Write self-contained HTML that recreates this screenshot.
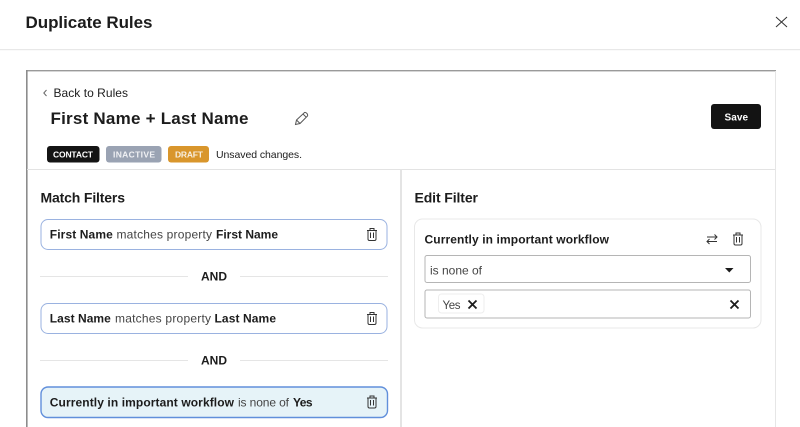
<!DOCTYPE html>
<html><head><meta charset="utf-8"><title>Duplicate Rules</title>
<style>
html,body{margin:0;padding:0;background:#fff;width:800px;height:427px;overflow:hidden}
svg{display:block;filter:blur(.25px)}
text{font-family:"Liberation Sans",sans-serif;fill:#1c1c1c}
.b{font-weight:700}
.r{fill:#444}
.w{fill:#fff;font-weight:700;font-size:8.5px}
</style></head><body>
<svg width="800" height="427" viewBox="0 0 800 427" xmlns="http://www.w3.org/2000/svg">
<defs>
<g id="trash" fill="none" stroke="#333" stroke-width="1">
<path d="M-5 -4H5M-2 -4V-6H2V-4M-4 -4V4.500Q-4 6 -2.500 6H2.500Q4 6 4 4.500V-4M-1.500 -2V3.500M1.500 -2V3.500"/>
</g>
</defs>
<rect width="800" height="427" fill="#fff"/>
<text x="25.500" y="28" class="b" font-size="17" textLength="127" lengthAdjust="spacing">Duplicate Rules</text>
<path d="M776 17L787 27M787 17L776 27" stroke="#333" stroke-width="1" fill="none"/>
<rect x="0" y="49" width="800" height="1.200" fill="#e8e8e8"/>

<rect x="26" y="70" width="750" height="1.400" fill="#9a9a9a"/>
<rect x="26" y="70" width="1.600" height="357" fill="#8c8c8c"/>
<rect x="775" y="71" width="1" height="356" fill="#e6e6e6"/>
<rect x="27" y="169" width="748" height="1" fill="#e3e3e3"/>
<rect x="400" y="169" width="2" height="258" fill="#e4e4e4"/>

<path d="M46.500 90L43.800 93L46.500 96" stroke="#666" stroke-width="1" fill="none"/>
<text x="53.500" y="97" font-size="12" textLength="74.500" lengthAdjust="spacing">Back to Rules</text>
<text x="50.500" y="124" class="b" font-size="17" textLength="198" lengthAdjust="spacing">First Name + Last Name</text>
<path d="M295.500 124.500L296.500 120L304.500 112.500Q305.500 112 307 113.500Q308 115 307.500 116L300 123.500ZM296.500 120L300 123.500M303 114L306.300 117.300" stroke="#555" stroke-width="1" fill="none"/>

<rect x="47" y="146" width="52.500" height="16.500" rx="3" fill="#141414"/>
<text x="53" y="157.700" class="w" textLength="40" lengthAdjust="spacing">CONTACT</text>
<rect x="106" y="146" width="55.500" height="16.500" rx="3" fill="#9aa3b3"/>
<text x="113" y="157.700" class="w" textLength="42" lengthAdjust="spacing" style="fill:#f0f1f4">INACTIVE</text>
<rect x="168" y="146" width="41" height="16.500" rx="3" fill="#d9962c"/>
<text x="175" y="157.700" class="w" textLength="28" lengthAdjust="spacing" style="fill:#f8efe0">DRAFT</text>
<text x="216" y="158" font-size="10.500" textLength="86" lengthAdjust="spacing">Unsaved changes.</text>

<rect x="711" y="104" width="50" height="25" rx="3" fill="#131313"/>
<text x="724.500" y="120.500" font-size="10" class="b" style="fill:#fff" textLength="23.500" lengthAdjust="spacing">Save</text>

<text x="40.500" y="202.500" class="b" font-size="14" textLength="84.500" lengthAdjust="spacing">Match Filters</text>

<rect x="41" y="219.500" width="346" height="30" rx="7" fill="#fff" stroke="#9ab2e0" stroke-width="1"/>
<text x="49.800" y="238.600" class="b" font-size="12" textLength="63" lengthAdjust="spacing">First Name</text>
<text x="116.500" y="238.600" class="r" font-size="12" textLength="95.500" lengthAdjust="spacing">matches property</text>
<text x="216" y="238.600" class="b" font-size="12" textLength="62" lengthAdjust="spacing">First Name</text>
<use href="#trash" x="372" y="234.500"/>

<rect x="40" y="276" width="148" height="1" fill="#e5e5e5"/>
<rect x="240" y="276" width="148" height="1" fill="#e5e5e5"/>
<text x="201" y="280.500" class="b" font-size="12" textLength="26" lengthAdjust="spacing">AND</text>

<rect x="41" y="303.500" width="346" height="30" rx="7" fill="#fff" stroke="#9ab2e0" stroke-width="1"/>
<text x="49.800" y="322.600" class="b" font-size="12" textLength="61" lengthAdjust="spacing">Last Name</text>
<text x="115" y="322.600" class="r" font-size="12" textLength="96" lengthAdjust="spacing">matches property</text>
<text x="214.500" y="322.600" class="b" font-size="12" textLength="61.500" lengthAdjust="spacing">Last Name</text>
<use href="#trash" x="372" y="318.500"/>

<rect x="40" y="360" width="148" height="1" fill="#e5e5e5"/>
<rect x="240" y="360" width="148" height="1" fill="#e5e5e5"/>
<text x="201" y="364.500" class="b" font-size="12" textLength="26" lengthAdjust="spacing">AND</text>

<rect x="41" y="387" width="346.500" height="30.500" rx="7" fill="#e6f3f8" stroke="#618fdb" stroke-width="1.400"/>
<text x="49.800" y="406.600" class="b" font-size="12" textLength="184.200" lengthAdjust="spacing">Currently in important workflow</text>
<text x="238" y="406.600" class="r" font-size="12" textLength="51" lengthAdjust="spacing">is none of</text>
<text x="293" y="406.600" class="b" font-size="12" textLength="19.500" lengthAdjust="spacing">Yes</text>
<use href="#trash" x="372" y="402"/>

<text x="414.500" y="202.500" class="b" font-size="14" textLength="63.500" lengthAdjust="spacing">Edit Filter</text>
<rect x="414.500" y="219" width="346.500" height="109" rx="8" fill="#fff" stroke="#e8e8e8" stroke-width="1"/>
<text x="424.500" y="243.500" class="b" font-size="12" textLength="184.500" lengthAdjust="spacing">Currently in important workflow</text>
<path d="M707 237H717M714.500 234.500L717 237L714.500 239.500M717 241.500H707M709.500 239L707 241.500L709.500 244" stroke="#333" stroke-width="1" fill="none"/>
<use href="#trash" x="738" y="239"/>

<rect x="425" y="255.500" width="325.500" height="27" rx="2" fill="#fff" stroke="#b5b5b5" stroke-width="1"/>
<text x="430" y="274.500" class="r" font-size="12" textLength="52" lengthAdjust="spacing">is none of</text>
<path d="M725 268H733.500L729.300 272.500Z" fill="#1c1c1c"/>

<rect x="425" y="290" width="325.500" height="28" rx="2" fill="#fff" stroke="#b5b5b5" stroke-width="1"/>
<rect x="438.500" y="294" width="45.500" height="19" rx="3" fill="#fff" stroke="#eeeeee" stroke-width="1"/>
<text x="442.500" y="309" class="r" font-size="11.500" textLength="18" lengthAdjust="spacing">Yes</text>
<path d="M468.500 300.500L476.500 308.500M476.500 300.500L468.500 308.500M730.500 300.500L738.500 308.500M738.500 300.500L730.500 308.500" stroke="#1c1c1c" stroke-width="1.800" fill="none"/>
</svg>
</body></html>
